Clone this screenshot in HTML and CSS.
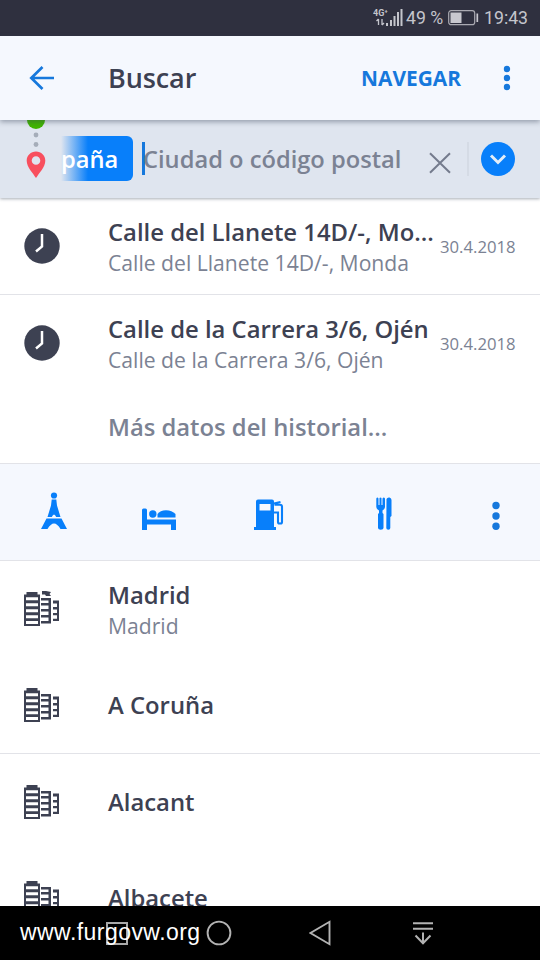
FILE: index.html
```html
<!DOCTYPE html>
<html lang="es">
<head>
<meta charset="utf-8">
<title>Buscar</title>
<link rel="stylesheet" href="styles.css">
</head>
<body>
<svg class="defs" width="0" height="0" aria-hidden="true">
  <symbol id="city" viewBox="0 0 36 36">
    <path fill-rule="evenodd" d="M2.500 1h11v2.500H16V35H0V3.500h2.500zM2 6.200v3h12v-3zM2 12.200v3h12v-3zM2 18.200v3h12v-3zM2 24.200v3h12v-3zM2 30v3h12v-3z"/>
    <path d="M17 7h10v25.500H17V30h7.500v-3.500H17V24h7.500v-3.500H17V18h7.500v-3.500H17V12h7.500V9.500H17zM29 9.500h6v20.500h-6v-2.200h4v-3.500h-4v-2.400h4v-3.500h-4v-2.400h4v-3.500h-4z"/>
  </symbol>
  <symbol id="clock" viewBox="0 0 36 36">
    <circle cx="18" cy="18" r="17.700"/>
    <path d="M18 6v12.500l-6 5" fill="none" stroke="#fff" stroke-width="2.500"/>
  </symbol>
</svg>
<div class="screen">
  <div class="status">
    <svg width="31" height="22" viewBox="0 0 31 22">
      <g class="net"><text x="0" y="9">4G⁺</text></g>
      <path d="M5.500 12v6M3.500 14l2-2M9 12v6M11 16l-2 2" fill="none" stroke="#c4c5cc" stroke-width="1.300"/>
      <path d="M13 16h2v3h-2zM17 13h2v6h-2zM20.500 9h2v10h-2zM24 5h2v14h-2zM27.500 2h2v17h-2z" fill="#c4c5cc"/>
    </svg>
    <span class="pct">49 %</span>
    <svg class="battery" width="31" height="16" viewBox="0 0 31 16">
      <rect x=".7" y=".7" width="26" height="14" rx="2.500" fill="none" stroke="#aaaab2" stroke-width="1.200"/>
      <path d="M2.500 2.500h11v10.500h-11z" fill="#c8c8cf"/><path d="M29.300 3.500v8.500" stroke="#c8c8cf" stroke-width="1.700"/>
    </svg>
    <span class="time">19:43</span>
  </div>

  <header class="bar">
    <svg class="back" width="26" height="26" viewBox="0 0 26 26"><path d="M25 13H2M13.500 2L2.300 13l11.200 11" fill="none" stroke="#1678dc" stroke-width="2.700"/></svg>
    <h1>Buscar</h1>
    <span class="go">NAVEGAR</span>
    <svg class="more" width="8" height="26" viewBox="0 0 8 26"><circle cx="4" cy="4" r="3.200"/><circle cx="4" cy="13" r="3.200"/><circle cx="4" cy="22" r="3.200"/></svg>
  </header>

  <div class="search">
    <svg class="route" width="20" height="60" viewBox="0 0 20 60">
      <circle cx="10" cy="0" r="9" fill="#3fb400"/>
      <circle cx="10" cy="15" r="2.400" fill="#a5adb9"/><circle cx="10" cy="24.500" r="2.400" fill="#a5adb9"/>
      <path fill="#f84f5e" fill-rule="evenodd" d="M10 31.500c-5.200 0-9.300 4-9.300 9.200C.7 47 7 53 10 58c3-5 9.300-11 9.300-17.300 0-5.200-4.100-9.200-9.300-9.200zm0 4.700a4.300 4.300 0 1 1 0 8.600 4.300 4.300 0 0 1 0-8.600z"/>
    </svg>
    <div class="chip"><span>paña</span></div>
    <div class="field">Ciudad o código postal</div>
    <svg class="clear" width="22" height="22" viewBox="0 0 22 22"><path d="M1 1.200l20 19.600M21 1.200L1 20.800" stroke="#747b8d" stroke-width="2"/></svg>
    <svg class="expand" width="34" height="34" viewBox="0 0 34 34"><circle cx="17" cy="17" r="17" fill="#087ffa"/><path d="M10 13.500l7 7 7-7" fill="none" stroke="#e3edf8" stroke-width="3"/></svg>
  </div>

  <div class="row line">
    <svg class="icon" width="36" height="36"><use href="#clock"/></svg>
    <div class="text"><div class="name">Calle del Llanete 14D/-, Mo...</div><div class="sub">Calle del Llanete 14D/-, Monda</div></div>
    <span class="date">30.4.2018</span>
  </div>
  <div class="row">
    <svg class="icon" width="36" height="36"><use href="#clock"/></svg>
    <div class="text"><div class="name">Calle de la Carrera 3/6, Ojén</div><div class="sub">Calle de la Carrera 3/6, Ojén</div></div>
    <span class="date">30.4.2018</span>
  </div>
  <div class="history">Más datos del historial...</div>

  <div class="cats">
    <svg width="26" height="38" viewBox="0 0 26 38"><circle cx="13" cy="3.500" r="3.100"/><path d="M10.700 7.500h4.600l.7 6 3.500 11.500h-4.300q-2.200-5-4.400 0H6.500L10 13.500zM5.500 26.500h15L26 37h-6.500q-6.500-11-13 0H0z"/></svg>
    <svg width="34" height="22" viewBox="0 0 34 22"><path d="M0 2q0-1.500 1.500-1.500h2Q5 .5 5 2v9.500h29V22h-5v-5.500H5V22H0z"/><circle cx="10.800" cy="6" r="3.700"/><path d="M15.500 9.500V6Q18 2.200 24 2.200T33.500 6v3.500z"/></svg>
    <svg width="30" height="31" viewBox="0 0 30 31"><path fill-rule="evenodd" d="M2 2.500Q2 .5 4 .5h14q2 0 2 2V28h2v3H0v-3h2zM5.500 5v6.500h11V5z"/><path d="M20 4.500l6.500-1.500M20.500 5.800h5.500q2 0 2 2V23q0 1.500-1.500 1.500h-1Q24 24.500 24 23V13.500h-4" fill="none" stroke="#087ffa" stroke-width="2.100"/></svg>
    <svg width="16" height="33" viewBox="0 0 16 33"><path d="M.3 1.500Q1.400-.3 2.500 1.500V8h1V1q1-1 2 0v7h1V1.500Q7.800-.5 9 1.500V10q0 2-2.500 3.500v2.500L7.500 17v14q0 1.800-2.700 1.800T2 31V17l1-1v-2.500Q.3 12 .3 10zM10.500 2q1-2 3-1.500Q15.500 1 15.500 3v16l-1.200 1V31q0 1.800-2 1.800t-2-1.800z"/></svg>
    <svg width="8" height="30" viewBox="0 0 8 30"><circle cx="4" cy="5.500" r="3.700"/><circle cx="4" cy="16" r="3.700"/><circle cx="4" cy="26.300" r="3.700"/></svg>
  </div>

  <div class="cities">
    <div class="row"><svg class="icon" width="36" height="36"><use href="#city"/><path d="M18 0h4l5 1-1.500 2L27 5h-5L21 3.500h-3z"/></svg><div class="text"><div class="name">Madrid</div><div class="sub">Madrid</div></div></div>
    <div class="row line"><svg class="icon" width="36" height="36"><use href="#city"/></svg><div class="text"><div class="name">A Coruña</div></div></div>
    <div class="row"><svg class="icon" width="36" height="36"><use href="#city"/></svg><div class="text"><div class="name">Alacant</div></div></div>
    <div class="row"><svg class="icon" width="36" height="36"><use href="#city"/></svg><div class="text"><div class="name">Albacete</div></div></div>
  </div>

  <nav class="nav">
    <svg width="22" height="23" viewBox="0 0 22 23"><rect x="1" y="1" width="20" height="21" fill="none" stroke="#a9a9a9" stroke-width="2"/></svg>
    <svg width="26" height="26" viewBox="0 0 26 26"><circle cx="13" cy="13" r="11.400" fill="none" stroke="#b3b3b3" stroke-width="1.900"/></svg>
    <svg width="22" height="26" viewBox="0 0 22 26"><path d="M20.500 1.800v22.400L1.500 13z" fill="none" stroke="#b3b3b3" stroke-width="1.900"/></svg>
    <svg width="20" height="24" viewBox="0 0 20 24"><path d="M0 2.200h20M0 7.700h20M10 11.500v11M2.500 14.500l7.500 7.700 7.500-7.700" fill="none" stroke="#b3b3b3" stroke-width="2"/></svg>
    <span class="mark">www.furgovw.org</span>
  </nav>
</div>
</body>
</html>
```

FILE: styles.css
```css
* { box-sizing: border-box; }
body { margin: 0; background: #fff; font-family: "Open Sans", sans-serif; }
svg { display: block; flex: none; }
.defs { position: absolute; }
.screen { width: 540px; height: 960px; display: flex; flex-direction: column; overflow: hidden; white-space: nowrap; }

.status { height: 36px; flex: none; background: #2f303f; color: #c4c5cc; display: flex; align-items: center; padding-left: 373px; font: 17.700px Roboto, sans-serif; }
.net text { font: bold 9px Roboto, sans-serif; fill: #c4c5cc; }
.pct { width: 37px; margin-left: 2px; }
.battery { margin-left: 5px; }
.time { margin-left: 5px; }

.bar { height: 84px; flex: none; background: #f5f8fe; display: flex; align-items: center; padding-left: 29px; box-shadow: 0 2px 5px rgba(60, 70, 90, .45); position: relative; z-index: 1; }
.bar h1 { margin: -2px 0 0 53px; width: 253px; font-size: 27px; font-weight: 600; letter-spacing: -.1px; color: #3d4152; }
.go { width: 101px; font-size: 20.900px; font-weight: 700; color: #1678dc; }
.more { margin-left: 41px; fill: #1678dc; }

.search { height: 78px; flex: none; background: #dfe5ef; display: flex; align-items: center; padding-left: 26px; box-shadow: 0 1px 3px rgba(60, 70, 90, .45); font-size: 23.700px; font-weight: 600; }
.route { align-self: flex-start; }
.chip { width: 72px; height: 45px; margin: -1px 0 0 15px; border-radius: 0 6px 6px 0; background: linear-gradient(90deg, #dfe5ef, #087ffa 27px); color: #fff; display: flex; align-items: center; }
.field { width: 273px; height: 33px; line-height: 34px; margin: -1px 0 0 9px; border-left: 3px solid #1678dc; color: #7b8293; text-indent: -2px; }
.clear { margin: 8px 16px 0 14px; }
.expand { box-sizing: content-box; padding-left: 12px; border-left: 2px solid #d5dbe5; }

.row { height: 96px; flex: none; display: flex; align-items: center; padding: 0 24px; fill: #3d4152; }
.line { height: 97px; border-bottom: 1px solid #e2e3e8; }
.text { width: 325px; margin-left: 48px; }
.name { margin: 1px 0 -1px; font-size: 23.850px; line-height: 33px; font-weight: 600; color: #3d4152; }
.sub { font-size: 21.150px; line-height: 29px; color: #7b8293; }
.date { margin-left: 7px; font-size: 16.700px; color: #7b8293; }
.history { height: 72px; flex: none; padding: 20px 0 0 108px; font-size: 23.800px; line-height: 33px; font-weight: 600; color: #7b8293; }

.cats { height: 98px; flex: none; background: #f5f8fe; border: solid #e2e3e8; border-width: 1px 0; display: flex; align-items: flex-end; padding: 0 0 30px 41px; fill: #087ffa; }
.cats svg:nth-child(2) { margin-left: 75px; }
.cats svg:nth-child(3) { margin-left: 78px; }
.cats svg:nth-child(4) { margin-left: 92px; }
.cats svg:nth-child(5) { margin-left: 100px; fill: #1678dc; }
.cities { flex: 1; min-height: 0; overflow: hidden; }
.cities .line { padding-bottom: 1px; }
.cities .row:nth-child(n+3) { padding-bottom: 1px; }

.nav { height: 54px; flex: none; background: #000; display: flex; align-items: center; padding-left: 106px; position: relative; }
.nav svg:nth-child(2) { margin-left: 78px; }
.nav svg:nth-child(3) { margin-left: 77px; }
.nav svg:nth-child(4) { margin-left: 82px; }
.mark { position: absolute; left: 20px; top: 12px; color: #fff; font: 23px/28px "Liberation Sans", sans-serif; letter-spacing: .45px; }
```
